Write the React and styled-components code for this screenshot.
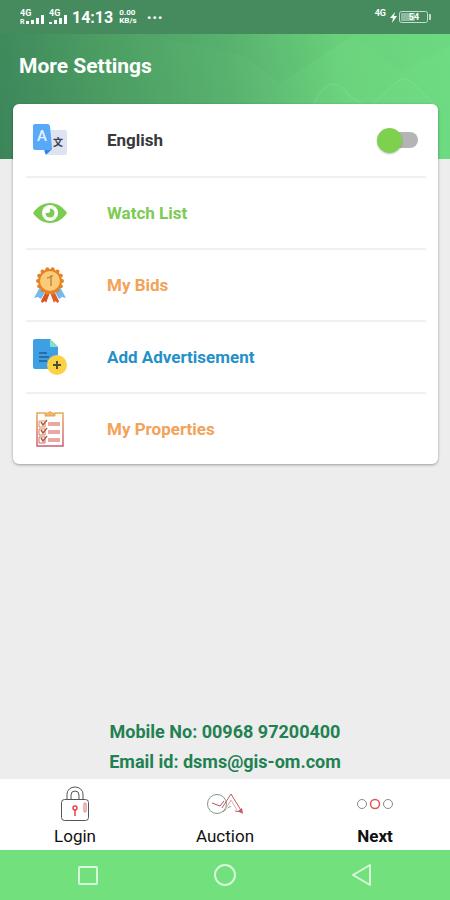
import { useState } from "react";
import styled, { createGlobalStyle } from "styled-components";

const menuItems = [
  { id: "watch", title: "Watch List", color: "#7ccb52", Icon: EyeIcon },
  { id: "bids", title: "My Bids", color: "#f2a259", Icon: MedalIcon },
  { id: "advert", title: "Add Advertisement", color: "#2490c9", Icon: DocumentIcon },
  { id: "properties", title: "My Properties", color: "#f2a259", Icon: ClipboardIcon },
];

const tabs = [
  { id: "login", title: "Login", Icon: LockIcon },
  { id: "auction", title: "Auction", Icon: AuctionIcon },
  { id: "next", title: "Next", Icon: NextIcon, active: true },
];

function RoamingSignalIcon() {
  return (
    <svg width="25" height="16" viewBox="0 0 25 16" fill="#fff" aria-hidden="true">
      <text x="0" y="7" fontSize="9" fontWeight="700">4G</text>
      <text x="0" y="15" fontSize="7" fontWeight="700">R</text>
      <rect x="6" y="12" width="3" height="3" />
      <rect x="11" y="11" width="3" height="4" />
      <rect x="16" y="9" width="3" height="6" />
      <rect x="21" y="6" width="3" height="9" />
    </svg>
  );
}

function SignalIcon() {
  return (
    <svg width="19" height="16" viewBox="0 0 19 16" fill="#fff" aria-hidden="true">
      <text x="0" y="7" fontSize="9" fontWeight="700">4G</text>
      <rect x="0" y="13" width="3" height="2" />
      <rect x="5" y="11" width="3" height="4" />
      <rect x="10" y="9" width="3" height="6" />
      <rect x="15" y="6" width="3" height="9" />
    </svg>
  );
}

function BatteryIcon() {
  return (
    <svg width="42" height="14" viewBox="0 0 42 14" aria-hidden="true">
      <path d="M5 2 0 8h3l-1 5 5-7H4z" fill="#fff" />
      <rect x="9.5" y="1.5" width="28" height="11" rx="2" fill="none" stroke="#c5ddce" />
      <rect x="11" y="3" width="14" height="8" fill="#8dba9d" />
      <path d="M39 4h1q1 0 1 1v4q0 1-1 1h-1z" fill="#c5ddce" />
      <text x="24" y="10" fontSize="9" fontWeight="700" fill="#fff" textAnchor="middle">54</text>
    </svg>
  );
}

function TranslateIcon() {
  return (
    <svg width="34" height="32" viewBox="0 0 34 32" aria-hidden="true">
      <rect x="14" y="6" width="20" height="25" rx="2" fill="#dde3f0" />
      <path d="M11 25h8l-5 5q-1 2-2-1z" fill="#2f86e8" />
      <path d="M2 0h13q1 0 2 2l2 22q0 2-1 2H2q-2 0-2-2V2q0-2 2-2z" fill="#58aaf9" />
      <text x="9" y="17" fontSize="15" fontWeight="500" fill="#e5f3ff" textAnchor="middle">A</text>
      <text x="25" y="22" fontSize="10" fontWeight="700" fill="#39404d" textAnchor="middle">文</text>
    </svg>
  );
}

function EyeIcon() {
  return (
    <svg width="34" height="34" viewBox="0 0 34 34" aria-hidden="true">
      <path d="M0 17C4 11 10 7 17 7s13 4 17 10c-4 6-10 10-17 10S4 23 0 17z" fill="#7ccb52" />
      <circle cx="17" cy="17" r="8" fill="#fff" />
      <circle cx="17" cy="17" r="4.5" fill="#7ccb52" />
      <path d="M12 12h5v3q0 2-2 2h-3z" fill="#fff" />
    </svg>
  );
}

function MedalIcon() {
  const scallops = Array.from({ length: 14 }, (_, i) => {
    const angle = (i * Math.PI * 2) / 14;
    return [17 + Math.cos(angle) * 12, 14 + Math.sin(angle) * 12];
  });
  return (
    <svg width="34" height="36" viewBox="0 0 34 36" aria-hidden="true">
      <path d="M7 20 1 31l4-1 3 2 6-10z" fill="#73baf0" />
      <path d="m27 20 6 11-4-1-3 2-6-10z" fill="#73baf0" />
      <path d="m14 22-6 12 1 2 3-2 1 2 5-13z" fill="#d9531e" />
      <path d="m20 22 6 12-1 2-3-2-1 2-5-13z" fill="#e65a20" />
      {scallops.map(([x, y], i) => (
        <circle key={i} cx={x} cy={y} r="2" fill="#e58325" />
      ))}
      <circle cx="17" cy="14" r="12" fill="#e58325" />
      <circle cx="17" cy="14" r="10" fill="#fbcb77" />
      <path d="M14 11q3 0 4-2h2M18 9v10" stroke="#bb8a45" strokeWidth="1.5" fill="none" />
    </svg>
  );
}

function DocumentIcon() {
  return (
    <svg width="34" height="36" viewBox="0 0 34 36" aria-hidden="true">
      <path d="M2 0h15l8 8v22H2q-2 0-2-2V2q0-2 2-2z" fill="#3e9fe4" />
      <path d="m17 0 8 8h-7q-1 0-1-1z" fill="#82e2c5" />
      <path d="M6 14h8M6 18h10M6 22h8" stroke="#24608f" strokeWidth="1.5" />
      <circle cx="24" cy="26" r="10" fill="#fbd146" />
      <path d="M20 26h8M24 22v8" stroke="#50502f" strokeWidth="2" />
    </svg>
  );
}

function ClipboardIcon() {
  return (
    <svg width="28" height="36" viewBox="0 0 28 36" fill="none" aria-hidden="true">
      <defs>
        <linearGradient id="clip" x1="0" y1="0" x2="0" y2="36" gradientUnits="userSpaceOnUse">
          <stop offset="0" stopColor="#e8ad56" />
          <stop offset="1" stopColor="#c55d70" />
        </linearGradient>
      </defs>
      <g stroke="url(#clip)">
        <path d="M9 2H1v33h26V2h-8" strokeWidth="1.5" />
        <path d="M9 5V2h3q2-3 4 0h3v3z" fill="#edb669" />
        {[9, 17, 25].map((y) => (
          <g key={y}>
            <path d={`M9 ${y + 1}H3v6h6V${y + 3}`} />
            <path d={`m5 ${y + 2} 2 3 4-5`} stroke="#b65a3c" strokeWidth="1.5" />
            <path d={`M12 ${y + 4}h12`} stroke="#e9a7a2" strokeWidth="4" />
          </g>
        ))}
      </g>
    </svg>
  );
}

function LockIcon() {
  return (
    <svg width="30" height="36" viewBox="0 0 30 36" fill="none" stroke="#555" aria-hidden="true">
      <rect x="1.5" y="13.5" width="27" height="21" rx="3" />
      <path d="M7 13V8a8 7 0 0 1 16 0v5M11 13V9a4 4 0 0 1 8 0v4" />
      <circle cx="15" cy="22" r="2" stroke="#df4548" strokeWidth="1.5" />
      <path d="M15 24v6" stroke="#df4548" strokeWidth="1.5" />
      <rect x="24" y="17" width="2" height="9" rx="1" stroke="#e46a6c" />
    </svg>
  );
}

function AuctionIcon() {
  return (
    <svg width="38" height="24" viewBox="0 0 38 24" fill="none" aria-hidden="true">
      <circle cx="11" cy="12" r="9.5" stroke="#829b83" />
      <path d="m6 11 8 3 4-5" stroke="#bb4e53" />
      <path d="m16 16 9-14 11 18-7-1" stroke="#c55a61" />
      <path d="m19 18 6-10 6 10" stroke="#dcb0b1" />
      <path d="m32 19 5 3-1-6z" fill="#c55a61" />
      <path d="m17 20 6-5 4-1" stroke="#93a593" strokeDasharray="4 2" />
    </svg>
  );
}

function NextIcon() {
  return (
    <svg width="38" height="12" viewBox="0 0 38 12" fill="none" aria-hidden="true">
      <circle cx="6" cy="6" r="4.5" stroke="#888" />
      <circle cx="19" cy="6" r="4.5" stroke="#df5552" strokeWidth="1.5" />
      <circle cx="32" cy="6" r="4.5" stroke="#888" />
    </svg>
  );
}

function HeaderWaves() {
  return (
    <Waves viewBox="0 0 450 125" preserveAspectRatio="none" aria-hidden="true">
      <path d="M145 0 245 22 280 49 355 0z" fill="#35904f" opacity=".05" />
      <path d="M355 0 400 38 450 12V0z" fill="#43a85d" opacity=".04" />
      <path
        d="M312 72q12-25 24-22 6 1 14 12l18 12 29-26q9-7 16 1l24 24"
        fill="#8be995"
        fillOpacity=".08"
        stroke="#92e79c"
        strokeOpacity=".35"
      />
    </Waves>
  );
}

const App = () => {
  const [arabic, setArabic] = useState(false);

  return (
    <>
      <GlobalStyle />
      <Page>
        <StatusBar>
          <RoamingSignalIcon />
          <SignalIcon />
          <Time>14:13</Time>
          <Speed>
            <span>0.00</span>
            <span>KB/s</span>
          </Speed>
          <Dots>···</Dots>
          <Network>4G</Network>
          <BatteryIcon />
        </StatusBar>
        <Header>
          <HeaderWaves />
          <Title>More Settings</Title>
        </Header>
        <Card>
          <Row as="label">
            <IconBox>
              <TranslateIcon />
            </IconBox>
            <Label $color="#39393b">English</Label>
            <Switch
              type="checkbox"
              role="switch"
              checked={arabic}
              onChange={() => setArabic(!arabic)}
            />
          </Row>
          {menuItems.map(({ id, title, color, Icon }) => (
            <Row key={id} href={`#${id}`}>
              <IconBox>
                <Icon />
              </IconBox>
              <Label $color={color}>{title}</Label>
            </Row>
          ))}
        </Card>
        <Contact>
          <p>Mobile No: 00968 97200400</p>
          <p>Email id: dsms@gis-om.com</p>
        </Contact>
        <TabBar>
          {tabs.map(({ id, title, Icon, active }) => (
            <Tab key={id} href={`#${id}`} $active={active}>
              <TabIcon>
                <Icon />
              </TabIcon>
              {title}
            </Tab>
          ))}
        </TabBar>
        <SystemBar>
          <SystemButton type="button" aria-label="Recent apps">
            <svg width="24" height="24" viewBox="0 0 24 24">
              <rect x="3" y="4" width="18" height="17" rx="1" />
            </svg>
          </SystemButton>
          <SystemButton type="button" aria-label="Home">
            <svg width="24" height="24" viewBox="0 0 24 24">
              <circle cx="12" cy="12" r="10" />
            </svg>
          </SystemButton>
          <SystemButton type="button" aria-label="Back">
            <svg width="24" height="24" viewBox="0 0 24 24">
              <path d="m3 12 17-10v20z" />
            </svg>
          </SystemButton>
        </SystemBar>
      </Page>
    </>
  );
};

export default App;

const GlobalStyle = createGlobalStyle`
  * {
    box-sizing: border-box;
  }
  body {
    margin: 0;
    background: #ededed;
    font-family: Roboto, "Noto Sans CJK SC", sans-serif;
  }
  p, h1 {
    margin: 0;
  }
  svg {
    display: block;
    flex-shrink: 0;
  }
`;

const Page = styled.div`
  display: flex;
  flex-direction: column;
  min-height: 100vh;
`;

const StatusBar = styled.div`
  display: flex;
  align-items: center;
  gap: 4px;
  height: 34px;
  padding: 0 18px 0 20px;
  background: #458b5e;
  color: #fff;
`;

const Time = styled.span`
  font-size: 16px;
  font-weight: 700;
`;

const Speed = styled.span`
  display: flex;
  flex-direction: column;
  padding-left: 2px;
  font-size: 8px;
  font-weight: 700;
  line-height: 8px;
`;

const Dots = styled.span`
  padding-left: 6px;
  font-size: 18px;
  font-weight: 700;
`;

const Network = styled.span`
  margin-left: auto;
  padding-bottom: 8px;
  font-size: 9px;
  font-weight: 700;
`;

const Header = styled.header`
  position: relative;
  height: 125px;
  padding: 20px 19px;
  background: linear-gradient(78deg, #3c855a 0%, #4b9c62 25%, #59b36f 52%, #6bd37d 76%, #6edc82 100%);
`;

const Waves = styled.svg`
  position: absolute;
  inset: 0;
  width: 100%;
  height: 100%;
`;

const Title = styled.h1`
  position: relative;
  color: #fff;
  font-size: 21px;
  font-weight: 700;
  line-height: 24px;
`;

const Card = styled.main`
  position: relative;
  margin: -55px 12px 0 13px;
  padding: 0 12px 0 13px;
  background: #fff;
  border-radius: 6px;
  box-shadow: 0 1px 3px rgba(0, 0, 0, 0.35);
`;

const Row = styled.a`
  display: flex;
  align-items: center;
  height: 72px;
  padding: 0 8px 0 7px;
  text-decoration: none;
  cursor: pointer;

  & + & {
    border-top: 2px solid #f0f0f0;
  }
`;

const IconBox = styled.span`
  display: flex;
  justify-content: center;
  width: 34px;
  margin-right: 40px;
`;

const Label = styled.span`
  flex: 1;
  color: ${({ $color }) => $color};
  font-size: 17px;
  font-weight: 700;
`;

const Switch = styled.input`
  display: flex;
  align-items: center;
  appearance: none;
  width: 36px;
  height: 16px;
  margin: 0;
  border-radius: 8px;
  background: #b5b4b5;
  cursor: pointer;

  &::before {
    content: "";
    flex-shrink: 0;
    width: 25px;
    height: 25px;
    margin-left: -5px;
    border-radius: 50%;
    background: #7ed14f;
    box-shadow: 0 1px 2px rgba(0, 0, 0, 0.25);
  }

  &:checked::before {
    margin-left: 16px;
  }
`;

const Contact = styled.footer`
  margin-top: auto;
  padding-bottom: 2px;
  color: #218152;
  font-size: 18px;
  font-weight: 700;
  line-height: 30px;
  text-align: center;
`;

const TabBar = styled.nav`
  display: flex;
  height: 71px;
  background: #fff;
`;

const Tab = styled.a`
  display: flex;
  flex: 1;
  flex-direction: column;
  align-items: center;
  padding-top: 6px;
  color: #111;
  font-size: 17px;
  font-weight: ${({ $active }) => ($active ? 700 : 400)};
  line-height: 22px;
  text-decoration: none;
`;

const TabIcon = styled.span`
  display: flex;
  align-items: center;
  height: 38px;
  margin-bottom: 2px;
`;

const SystemBar = styled.div`
  display: flex;
  height: 50px;
  padding: 0 20px;
  background: #72e17d;
`;

const SystemButton = styled.button`
  display: flex;
  flex: 1;
  align-items: center;
  justify-content: center;
  padding: 0;
  background: transparent;
  border: none;
  cursor: pointer;

  svg {
    fill: none;
    stroke: #d5f8d9;
    stroke-width: 2;
    stroke-linejoin: round;
  }
`;
